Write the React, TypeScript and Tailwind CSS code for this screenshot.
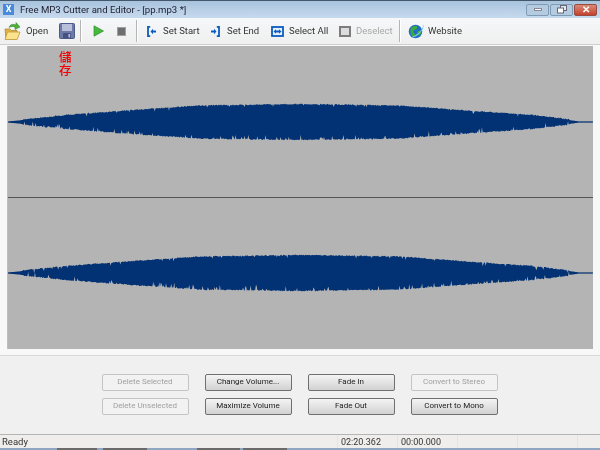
const uiFont = { fontFamily: 'Roboto, "Open Sans", sans-serif' };

// piecewise envelope of the recording, half height in px at a given x
const envelope: [number, number][] = [
  [0, 0.5],
  [59, 6.5],
  [125, 11.5],
  [192, 16],
  [292, 17.5],
  [392, 16],
  [459, 11],
  [525, 6.5],
  [559, 2.5],
  [572, 0.5],
  [586, 0.5],
];

function halfAt(x: number) {
  for (let i = 1; i < envelope.length; i++) {
    const [x0, h0] = envelope[i - 1];
    const [x1, h1] = envelope[i];
    if (x <= x1) return h0 + ((h1 - h0) * (x - x0)) / (x1 - x0);
  }
  return 0.5;
}

function wavePath(seed: number, center: number) {
  let s = seed;
  const rnd = () => {
    s = (s * 16807) % 2147483647;
    return s / 2147483647;
  };
  const top: string[] = [];
  const bottom: string[] = [];
  for (let x = 0; x <= 586; x += 0.75) {
    const h = halfAt(x);
    const big = h > 2;
    const noiseT = big ? rnd() * 1.1 : 0;
    const noiseB = big ? rnd() * 1.1 : 0;
    const notchT = big && rnd() > 0.95 ? rnd() * 3.5 : 0;
    const notchB = big && rnd() > 0.88 ? rnd() * 5 : 0;
    top.push(`${x},${(center - h - noiseT + notchT).toFixed(1)}`);
    bottom.unshift(`${x},${(center + h + noiseB - notchB).toFixed(1)}`);
  }
  return `M${top.join("L")}L${bottom.join("L")}Z`;
}

function Channel({ seed, center }: { seed: number; center: number }) {
  return (
    <div className="h-[151px] w-full">
      <svg viewBox="0 0 586 151" className="block h-[151px] w-full">
        <line x1="0" y1={center} x2="586" y2={center} stroke="#5f7590" strokeWidth="1" />
        <path d={wavePath(seed, center)} fill="#023274" />
      </svg>
    </div>
  );
}

function Sep({ className }: { className: string }) {
  return <div className={`h-[22px] w-[2px] border-l border-[#b4b4b4] bg-white ${className}`} />;
}

function ToolText({ children, className, dim }: { children: string; className: string; dim?: boolean }) {
  return (
    <span className={`whitespace-nowrap text-[9.5px] leading-none ${dim ? "text-[#a8a8a8]" : "text-[#333]"} ${className}`}>
      {children}
    </span>
  );
}

function OpenIcon() {
  return (
    <svg width="17" height="20" viewBox="0 0 17 20" className="ml-[4px] shrink-0">
      <path d="M1 8h5l1.500 1.500H13V18H2z" fill="#e2b54c" stroke="#a67c24" strokeWidth=".7" />
      <path d="M3.500 11H16l-2.800 7.500H1z" fill="#fbe28b" stroke="#b98f30" strokeWidth=".7" />
      <path d="M5 6.500C6 3.500 9 2.500 12 4V1.500l4 4.500-5 2.500V6C9 5 7 5.300 5 6.500z" fill="#4fb03a" stroke="#2c7f22" strokeWidth=".5" />
    </svg>
  );
}

function SaveIcon() {
  return (
    <svg width="16" height="16" viewBox="0 0 16 16" className="ml-[10px] shrink-0">
      <rect x=".5" y=".5" width="15" height="15" rx="1" fill="#6d7aa8" stroke="#4d5a8a" />
      <rect x="3" y="1" width="10" height="7" fill="#b7bfda" />
      <rect x="4" y="10" width="8" height="5.500" fill="#465281" />
      <rect x="9.500" y="11" width="1.600" height="3.400" fill="#b9c1da" />
    </svg>
  );
}

function PlayIcon() {
  return (
    <svg width="11" height="12" viewBox="0 0 11 12" className="ml-[11px] shrink-0">
      <path d="M1 .8 10.500 6 1 11.200z" fill="#46b83a" stroke="#2e8f2a" strokeWidth=".7" />
    </svg>
  );
}

function StopIcon() {
  return (
    <svg width="9" height="9" viewBox="0 0 9 9" className="ml-[13px] shrink-0">
      <rect x=".5" y=".5" width="8" height="8" fill="#6e6e6e" stroke="#a0a0a0" />
    </svg>
  );
}

function SetStartIcon() {
  return (
    <svg width="9" height="11" viewBox="0 0 9 11" className="ml-[9px] shrink-0">
      <path d="M3.200 .8H1v9.400h2.200" fill="none" stroke="#0b5cc0" strokeWidth="1.800" />
      <path d="M3.500 5.500 6 2.800v1.700h3v2H6v1.700z" fill="#0b5cc0" />
    </svg>
  );
}

function SetEndIcon() {
  return (
    <svg width="9" height="11" viewBox="0 0 9 11" className="ml-[13px] shrink-0">
      <path d="M5.800 .8H8v9.400H5.800" fill="none" stroke="#0b5cc0" strokeWidth="1.800" />
      <path d="M5.500 5.500 3 2.800v1.700H0v2h3v1.700z" fill="#0b5cc0" />
    </svg>
  );
}

function SelectAllIcon() {
  return (
    <svg width="13" height="11" viewBox="0 0 13 11" className="ml-[12px] shrink-0">
      <rect x="1" y="1" width="11" height="9" fill="#e8f0fa" stroke="#0b5cc0" strokeWidth="1.800" />
      <path d="M2.500 5.500 5 3.300v1.300h3V3.300l2.500 2.200L8 7.700V6.400H5v1.300z" fill="#0b5cc0" />
    </svg>
  );
}

function DeselectIcon() {
  return (
    <svg width="12" height="11" viewBox="0 0 12 11" className="ml-[12px] shrink-0">
      <rect x="1" y="1" width="10" height="9" fill="#dcdcdc" stroke="#7c7c7c" strokeWidth="2" />
    </svg>
  );
}

function GlobeIcon() {
  return (
    <svg width="16" height="16" viewBox="0 0 16 16" className="ml-[7px] shrink-0">
      <circle cx="7.500" cy="8.500" r="6.800" fill="#1c6fc4" />
      <path d="M3 5c2-2 5-2.500 6-1.500S8 7 6.500 7 5 10 7 11s0 3-1.500 3S1.500 9.500 3 5zM10 8c1.500-1 3-.5 3.500.5S12 13 10.500 12.500 9 9 10 8z" fill="#3fa83c" />
      <path d="M14 .8c1.500.6 1.400 3-.2 5.500C11.500 10 6 13.500 2.500 14.500c1 .2 3 .1 4.500-.7 3.500-1.800 7-5.300 8.200-8.600.7-2 .4-3.700-1.200-4.400z" fill="#7fc2ef" />
    </svg>
  );
}

function Btn({ children, off }: { children: string; off?: boolean }) {
  return (
    <div
      className={
        off
          ? "flex h-[17px] items-center justify-center rounded-[2px] border border-[#c4c4c4] bg-[#f2f2f2] text-[8px] text-[#a0a0a0]"
          : "flex h-[17px] items-center justify-center rounded-[2px] border border-[#6f6f6f] bg-gradient-to-b from-[#f4f4f4] to-[#d2d2d2] text-[8px] text-[#222]"
      }
    >
      {children}
    </div>
  );
}

function WinBtn({ className, children }: { className: string; children: React.ReactNode }) {
  return (
    <div className={`flex h-[12px] w-[23px] items-center justify-center rounded-[2px] border ${className}`}>
      {children}
    </div>
  );
}

export default function App() {
  return (
    <div className="flex h-[450px] w-[600px] flex-col overflow-hidden bg-[#f0f0f0] blur-[0.3px]" style={uiFont}>
      {/* title bar */}
      <div className="flex h-[18px] shrink-0 items-center border-t border-[#44586c] bg-gradient-to-b from-[#a9c3dd] to-[#c6daee] pl-[3px] pr-[3px]">
        <div className="flex h-[11px] w-[11px] items-center justify-center bg-[#4a8ad8] text-[9px] font-bold leading-none text-white">
          X
        </div>
        <span className="ml-[6px] whitespace-nowrap text-[9.6px] leading-none text-[#223]">
          Free MP3 Cutter and Editor - [pp.mp3 *]
        </span>
        <div className="ml-auto flex items-center gap-[1px]">
          <WinBtn className="border-[#7f9ab5] bg-[#b4cbe0]">
            <div className="h-[3px] w-[8px] border border-[#889] bg-white" />
          </WinBtn>
          <WinBtn className="border-[#7f9ab5] bg-[#b4cbe0]">
            <svg width="10" height="9" viewBox="0 0 10 9">
              <rect x="3.500" y=".5" width="6" height="5" fill="#dfe8f0" stroke="#667" />
              <rect x=".5" y="3" width="6" height="5" fill="#fff" stroke="#667" />
            </svg>
          </WinBtn>
          <WinBtn className="border-[#9a4a3f] bg-gradient-to-b from-[#d98a78] to-[#c2402c]">
            <span className="text-[10px] font-bold leading-none text-white">✕</span>
          </WinBtn>
        </div>
      </div>

      {/* toolbar */}
      <div className="flex h-[27px] shrink-0 items-center border-b border-[#cfcfcf] bg-gradient-to-b from-[#f6f7f9] to-[#efefef]">
        <OpenIcon />
        <ToolText className="ml-[5px] w-[23px]">Open</ToolText>
        <SaveIcon />
        <Sep className="ml-[5px]" />
        <PlayIcon />
        <StopIcon />
        <Sep className="ml-[10px]" />
        <SetStartIcon />
        <ToolText className="ml-[7px] w-[35px]">Set Start</ToolText>
        <SetEndIcon />
        <ToolText className="ml-[7px] w-[32px]">Set End</ToolText>
        <SelectAllIcon />
        <ToolText className="ml-[5px] w-[38px]">Select All</ToolText>
        <DeselectIcon />
        <ToolText dim className="ml-[5px] w-[36px]">Deselect</ToolText>
        <Sep className="ml-[7px]" />
        <GlobeIcon />
        <ToolText className="ml-[4px] w-[35px]">Website</ToolText>
      </div>

      {/* wave area */}
      <div className="flex h-[310px] shrink-0 bg-[#f8f8f8] pl-[7px] pr-[7px] pt-px">
        <div className="relative flex h-[303px] flex-1 flex-col border-l border-[#5fe6ea] bg-[#b4b4b4]">
          <Channel seed={4711} center={76} />
          <div className="h-px shrink-0 bg-[#555]" />
          <Channel seed={90210} center={75} />
          <div
            className="absolute left-[51px] top-[4px] w-[13px] text-[12.5px] font-medium leading-[13px] text-[#f00000]"
            style={{ fontFamily: '"Noto Sans CJK TC", sans-serif' }}
          >
            儲存
          </div>
        </div>
      </div>

      {/* buttons */}
      <div className="flex h-[79px] shrink-0 items-center justify-center border-t border-[#d9d9d9] pb-[2px]">
        <div className="grid w-[397px] grid-cols-[87px_87px_87px_87px] gap-x-[16px] gap-y-[7px]">
          <Btn off>Delete Selected</Btn>
          <Btn>Change Volume...</Btn>
          <Btn>Fade In</Btn>
          <Btn off>Convert to Stereo</Btn>
          <Btn off>Delete Unselected</Btn>
          <Btn>Maximize Volume</Btn>
          <Btn>Fade Out</Btn>
          <Btn>Convert to Mono</Btn>
        </div>
      </div>

      {/* status bar */}
      <div className="flex h-[14px] shrink-0 items-center border-t border-[#b5b5b5] bg-[#f0eeec] text-[9px] leading-none text-[#333]">
        <span className="ml-[2px] w-[335px] text-[9.5px]">Ready</span>
        <span className="h-full w-[60px] border-l border-[#e6e4e2] pl-[3px] leading-[14px]">02:20.362</span>
        <span className="h-full w-[60px] border-l border-[#e6e4e2] pl-[3px] leading-[14px]">00:00.000</span>
        <span className="h-full w-[60px] border-l border-[#e6e4e2]" />
        <span className="h-full w-[60px] border-l border-[#e6e4e2]" />
        <span className="h-full flex-1 border-l border-[#e6e4e2]" />
      </div>
      <div className="flex h-[2px] shrink-0 bg-[#8ea6c2]">
        <div className="ml-[57px] w-[40px] bg-[#6b6b6b]" />
        <div className="ml-[6px] w-[44px] bg-[#6b6b6b]" />
        <div className="ml-[50px] w-[43px] bg-[#6b6b6b]" />
        <div className="ml-[3px] w-[44px] bg-[#6b6b6b]" />
      </div>
    </div>
  );
}
